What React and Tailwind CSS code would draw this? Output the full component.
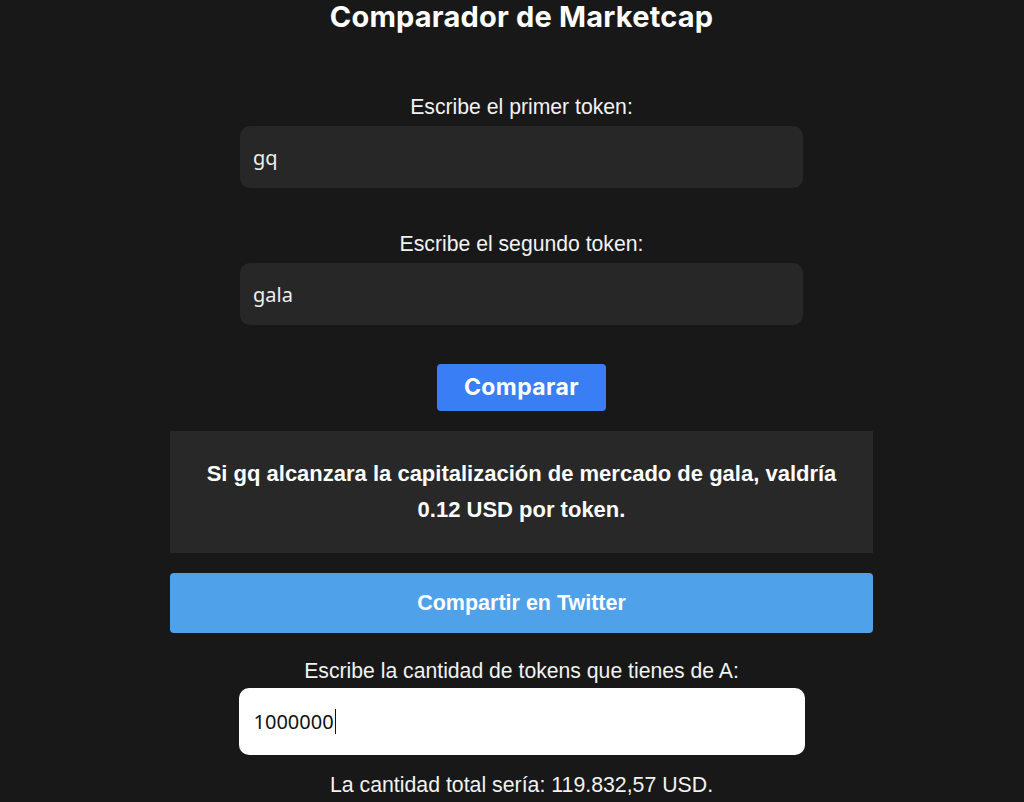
import React, { useState } from 'react';

const labelCls = "block text-center text-[21.2px] leading-[24px] text-[#f2f2f2] font-['Liberation_Sans',Arial,sans-serif]";

const App = () => {
    const [tokenA, setTokenA] = useState('gq');
    const [tokenB, setTokenB] = useState('gala');
    const [amount, setAmount] = useState('1000000');

    return (
        <div className="min-h-[802px] w-full bg-[#181818] pl-[19px] text-white overflow-hidden">
            <div className="flex flex-col items-center">
                {/* Title */}
                <h1 className="mt-[-3px] text-[29px] leading-[40px] font-bold tracking-[0.2px] font-['Inter',sans-serif]">
                    Comparador de Marketcap
                </h1>

                {/* First token */}
                <div className="mt-[58px] w-[563px]">
                    <label className={`${labelCls} mb-[7px]`}>Escribe el primer token:</label>
                    <input
                        value={tokenA}
                        onChange={(e) => setTokenA(e.target.value)}
                        className="w-full h-[62px] rounded-[10px] bg-[#272727] px-[13px] text-[20px] text-[#eeeeee] outline-none font-['Noto_Sans',sans-serif]"
                    />
                </div>

                {/* Second token */}
                <div className="mt-[44px] w-[563px]">
                    <label className={`${labelCls} mb-[7px]`}>Escribe el segundo token:</label>
                    <input
                        value={tokenB}
                        onChange={(e) => setTokenB(e.target.value)}
                        className="w-full h-[62px] rounded-[10px] bg-[#272727] px-[13px] text-[20px] text-[#eeeeee] outline-none font-['Noto_Sans',sans-serif]"
                    />
                </div>

                <button className="mt-[39px] w-[169px] h-[47px] rounded-[4px] bg-[#3a7ef5] text-[23px] tracking-[0.4px] font-bold text-white font-['Inter',sans-serif]">
                    Comparar
                </button>

                {/* Result */}
                <div className="mt-[20px] w-[703px] h-[122px] bg-[#282828] flex items-center justify-center px-[24px]">
                    <p className="text-center text-[22px] leading-[36px] font-bold font-['Liberation_Sans',Arial,sans-serif]">
                        Si gq alcanzara la capitalización de mercado de gala, valdría 0.12 USD por token.
                    </p>
                </div>

                <button className="mt-[20px] w-[703px] h-[60px] rounded-[4px] bg-[#4fa1ea] text-[21.5px] font-bold text-white font-['Liberation_Sans',Arial,sans-serif]">
                    Compartir en Twitter
                </button>

                {/* Amount */}
                <div className="mt-[26px] w-[566px]">
                    <label className={`${labelCls} mb-[5px]`}>Escribe la cantidad de tokens que tienes de A:</label>
                    <div className="relative">
                        <input
                            value={amount}
                            onChange={(e) => setAmount(e.target.value)}
                            className="w-full h-[67px] rounded-[10px] bg-white px-[15px] text-[20px] text-[#111] outline-none font-['Noto_Sans',sans-serif]"
                        />
                        {/* caret shown in the screenshot */}
                        <span className="pointer-events-none absolute left-[96px] top-[21px] h-[25px] w-px bg-[#111]" />
                    </div>
                </div>

                <p className="mt-[18px] text-[21.3px] leading-[24px] text-[#f2f2f2] font-['Liberation_Sans',Arial,sans-serif]">
                    La cantidad total sería: 119.832,57 USD.
                </p>
            </div>
        </div>
    );
};

export default App;
